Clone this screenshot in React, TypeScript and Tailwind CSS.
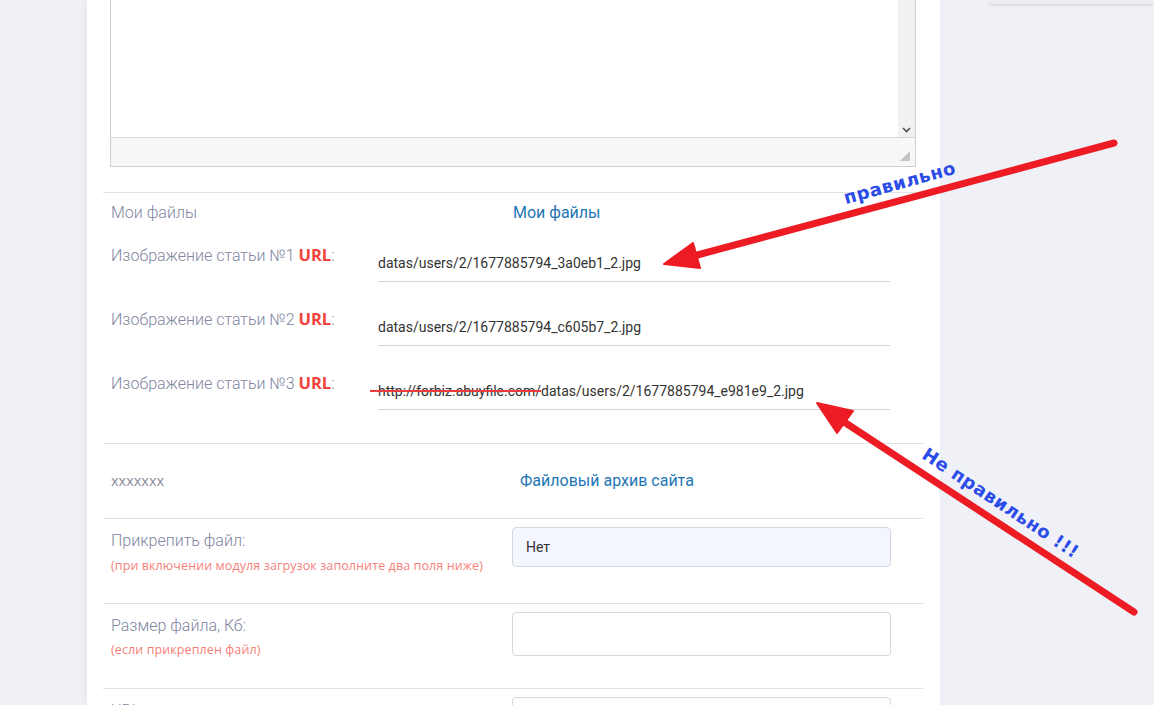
import React from 'react';

const label = "font-['Roboto',sans-serif] font-light text-[16px] text-[#80869f] leading-5";
const hint = "font-['Open_Sans',sans-serif] text-[12.5px] tracking-[0.1px] text-[#f67f7a] leading-4";
const heading = "font-['Roboto',sans-serif] text-[16px] text-[#1f76b5]";

const UrlLabel: React.FC<{ n: number }> = ({ n }) => (
    <div className={label}>
        Изображение статьи №{n}{' '}
        <span className="font-['Open_Sans',sans-serif] font-bold text-[16.5px] text-[#f2413b]">URL</span>:
    </div>
);

const urlRows = [
    { n: 1, value: 'datas/users/2/1677885794_3a0eb1_2.jpg' },
    { n: 2, value: 'datas/users/2/1677885794_c605b7_2.jpg' },
];

export default function App() {
    return (
        <div className="min-h-screen h-[705px] bg-[#f0f1f6] relative overflow-hidden">
            <div className="absolute top-0 right-0 w-[165px] h-[4px] bg-[#eceef3] shadow-sm"></div>

            <div className="ml-[87px] w-[853px] h-full bg-white shadow-[-2px_0_6px_rgba(0,0,0,0.05)]">
                {/* textarea */}
                <div className="ml-[23px] w-[806px] border border-t-0 border-[#cfcfcf]">
                    <div className="h-[137px] flex">
                        <div className="flex-1"></div>
                        <div className="w-[17px] bg-[#f1f1f1] flex items-end justify-center pb-[4px]">
                            <svg width="9" height="6" viewBox="0 0 9 6">
                                <path d="M1 1l3.5 3.5L8 1" fill="none" stroke="#505050" strokeWidth="1.6" />
                            </svg>
                        </div>
                    </div>
                    <div className="h-[29px] border-t border-[#d6d6d6] bg-[#f7f7f7] flex items-end justify-end pr-[5px] pb-[5px]">
                        <svg width="10" height="10" viewBox="0 0 10 10">
                            <path d="M10 0L10 10L0 10Z" fill="#c4c4c4" />
                        </svg>
                    </div>
                </div>

                {/* Мои файлы */}
                <div className="mt-[25px] ml-[16px] border-t border-[#e2e2e2] pb-[18px]">
                    <div className="h-[40px] flex items-center">
                        <div className={`${label} ml-[8px] w-[402px]`}>Мои файлы</div>
                        <div className={heading}>Мои файлы</div>
                    </div>
                    {urlRows.map(r => (
                        <div key={r.n} className="h-[64px] flex pt-[12px]">
                            <div className="ml-[8px] w-[267px]"><UrlLabel n={r.n} /></div>
                            <div className="w-[512px] h-[37px] border-b border-[#d4d4d4] flex items-center pt-[1px] font-['Roboto',sans-serif] text-[14px] text-[#333]">
                                {r.value}
                            </div>
                        </div>
                    ))}
                    <div className="h-[64px] flex pt-[12px]">
                        <div className="ml-[8px] w-[267px]"><UrlLabel n={3} /></div>
                        <div className="w-[512px] h-[37px] border-b border-[#d4d4d4] flex items-center pt-[1px] font-['Roboto',sans-serif] text-[14px] text-[#333]">
                            <span className="relative">
                                http://forbiz.abuyfile.com/
                                <span className="absolute -left-[8px] right-0 top-[9px] h-[1.5px] bg-[#ea3b3f]"></span>
                            </span>
                            datas/users/2/1677885794_e981e9_2.jpg
                        </div>
                    </div>
                </div>

                {/* Файловый архив */}
                <div className="ml-[16px] w-[820px] border-t border-[#e2e2e2]">
                    <div className="h-[75px] flex items-center border-b border-[#e2e2e2]">
                        <div className="ml-[8px] w-[409px] font-['Open_Sans',sans-serif] text-[14.5px] text-[#8a8d9c]">xxxxxxx</div>
                        <div className={heading}>Файловый архив сайта</div>
                    </div>
                    <div className="h-[85px] flex border-b border-[#e2e2e2]">
                        <div className="ml-[8px] w-[401px] pt-[12px]">
                            <div className={label}>Прикрепить файл:</div>
                            <div className={`${hint} mt-[7px]`}>(при включении модуля загрузок заполните два поля ниже)</div>
                        </div>
                        <div className="pt-[8px]">
                            <div className="w-[379px] h-[40px] rounded-[4px] border border-[#d3d7de] bg-[#f3f6fd] flex items-center pl-[13px] font-['Roboto',sans-serif] text-[14px] text-[#333]">
                                Нет
                            </div>
                        </div>
                    </div>
                    <div className="h-[85px] flex border-b border-[#e2e2e2]">
                        <div className="ml-[8px] w-[401px] pt-[12px]">
                            <div className={label}>Размер файла, Кб:</div>
                            <div className={`${hint} mt-[6px]`}>(если прикреплен файл)</div>
                        </div>
                        <div className="pt-[8px]">
                            <div className="w-[379px] h-[44px] rounded-[4px] border border-[#d3d7de] bg-white"></div>
                        </div>
                    </div>
                    <div className="h-[85px] flex">
                        <div className="ml-[8px] w-[401px] pt-[12px]">
                            <div className={label}>URL:</div>
                        </div>
                        <div className="pt-[8px]">
                            <div className="w-[379px] h-[44px] rounded-[4px] border border-[#d3d7de] bg-white"></div>
                        </div>
                    </div>
                </div>
            </div>

            {/* annotations */}
            <svg className="absolute inset-0 pointer-events-none" width="1154" height="705" viewBox="0 0 1154 705">
                <line x1="1114" y1="143" x2="690" y2="257" stroke="#ed1c24" strokeWidth="7" strokeLinecap="round" />
                <path d="M664 264L693 243L700 268Z" fill="#ed1c24" stroke="#ed1c24" strokeWidth="2" strokeLinejoin="round" />
                <line x1="1134" y1="612" x2="838" y2="418" stroke="#ed1c24" strokeWidth="7" strokeLinecap="round" />
                <path d="M817 403L853 411L837 433Z" fill="#ed1c24" stroke="#ed1c24" strokeWidth="2" strokeLinejoin="round" />
                <text
                    x="900"
                    y="184"
                    textAnchor="middle"
                    dominantBaseline="middle"
                    transform="rotate(-15.5 900 184)"
                    fontFamily="DejaVu Sans, sans-serif"
                    fontWeight="bold"
                    fontSize="18"
                    letterSpacing="0.5"
                    fill="#2b4ce8"
                >
                    правильно
                </text>
                <text
                    x="1000"
                    y="504"
                    textAnchor="middle"
                    dominantBaseline="middle"
                    transform="rotate(33.5 1000 504)"
                    fontFamily="DejaVu Sans, sans-serif"
                    fontWeight="bold"
                    fontSize="18"
                    letterSpacing="0.5"
                    fill="#2b4ce8"
                >
                    Не правильно !!!
                </text>
            </svg>
        </div>
    );
}
